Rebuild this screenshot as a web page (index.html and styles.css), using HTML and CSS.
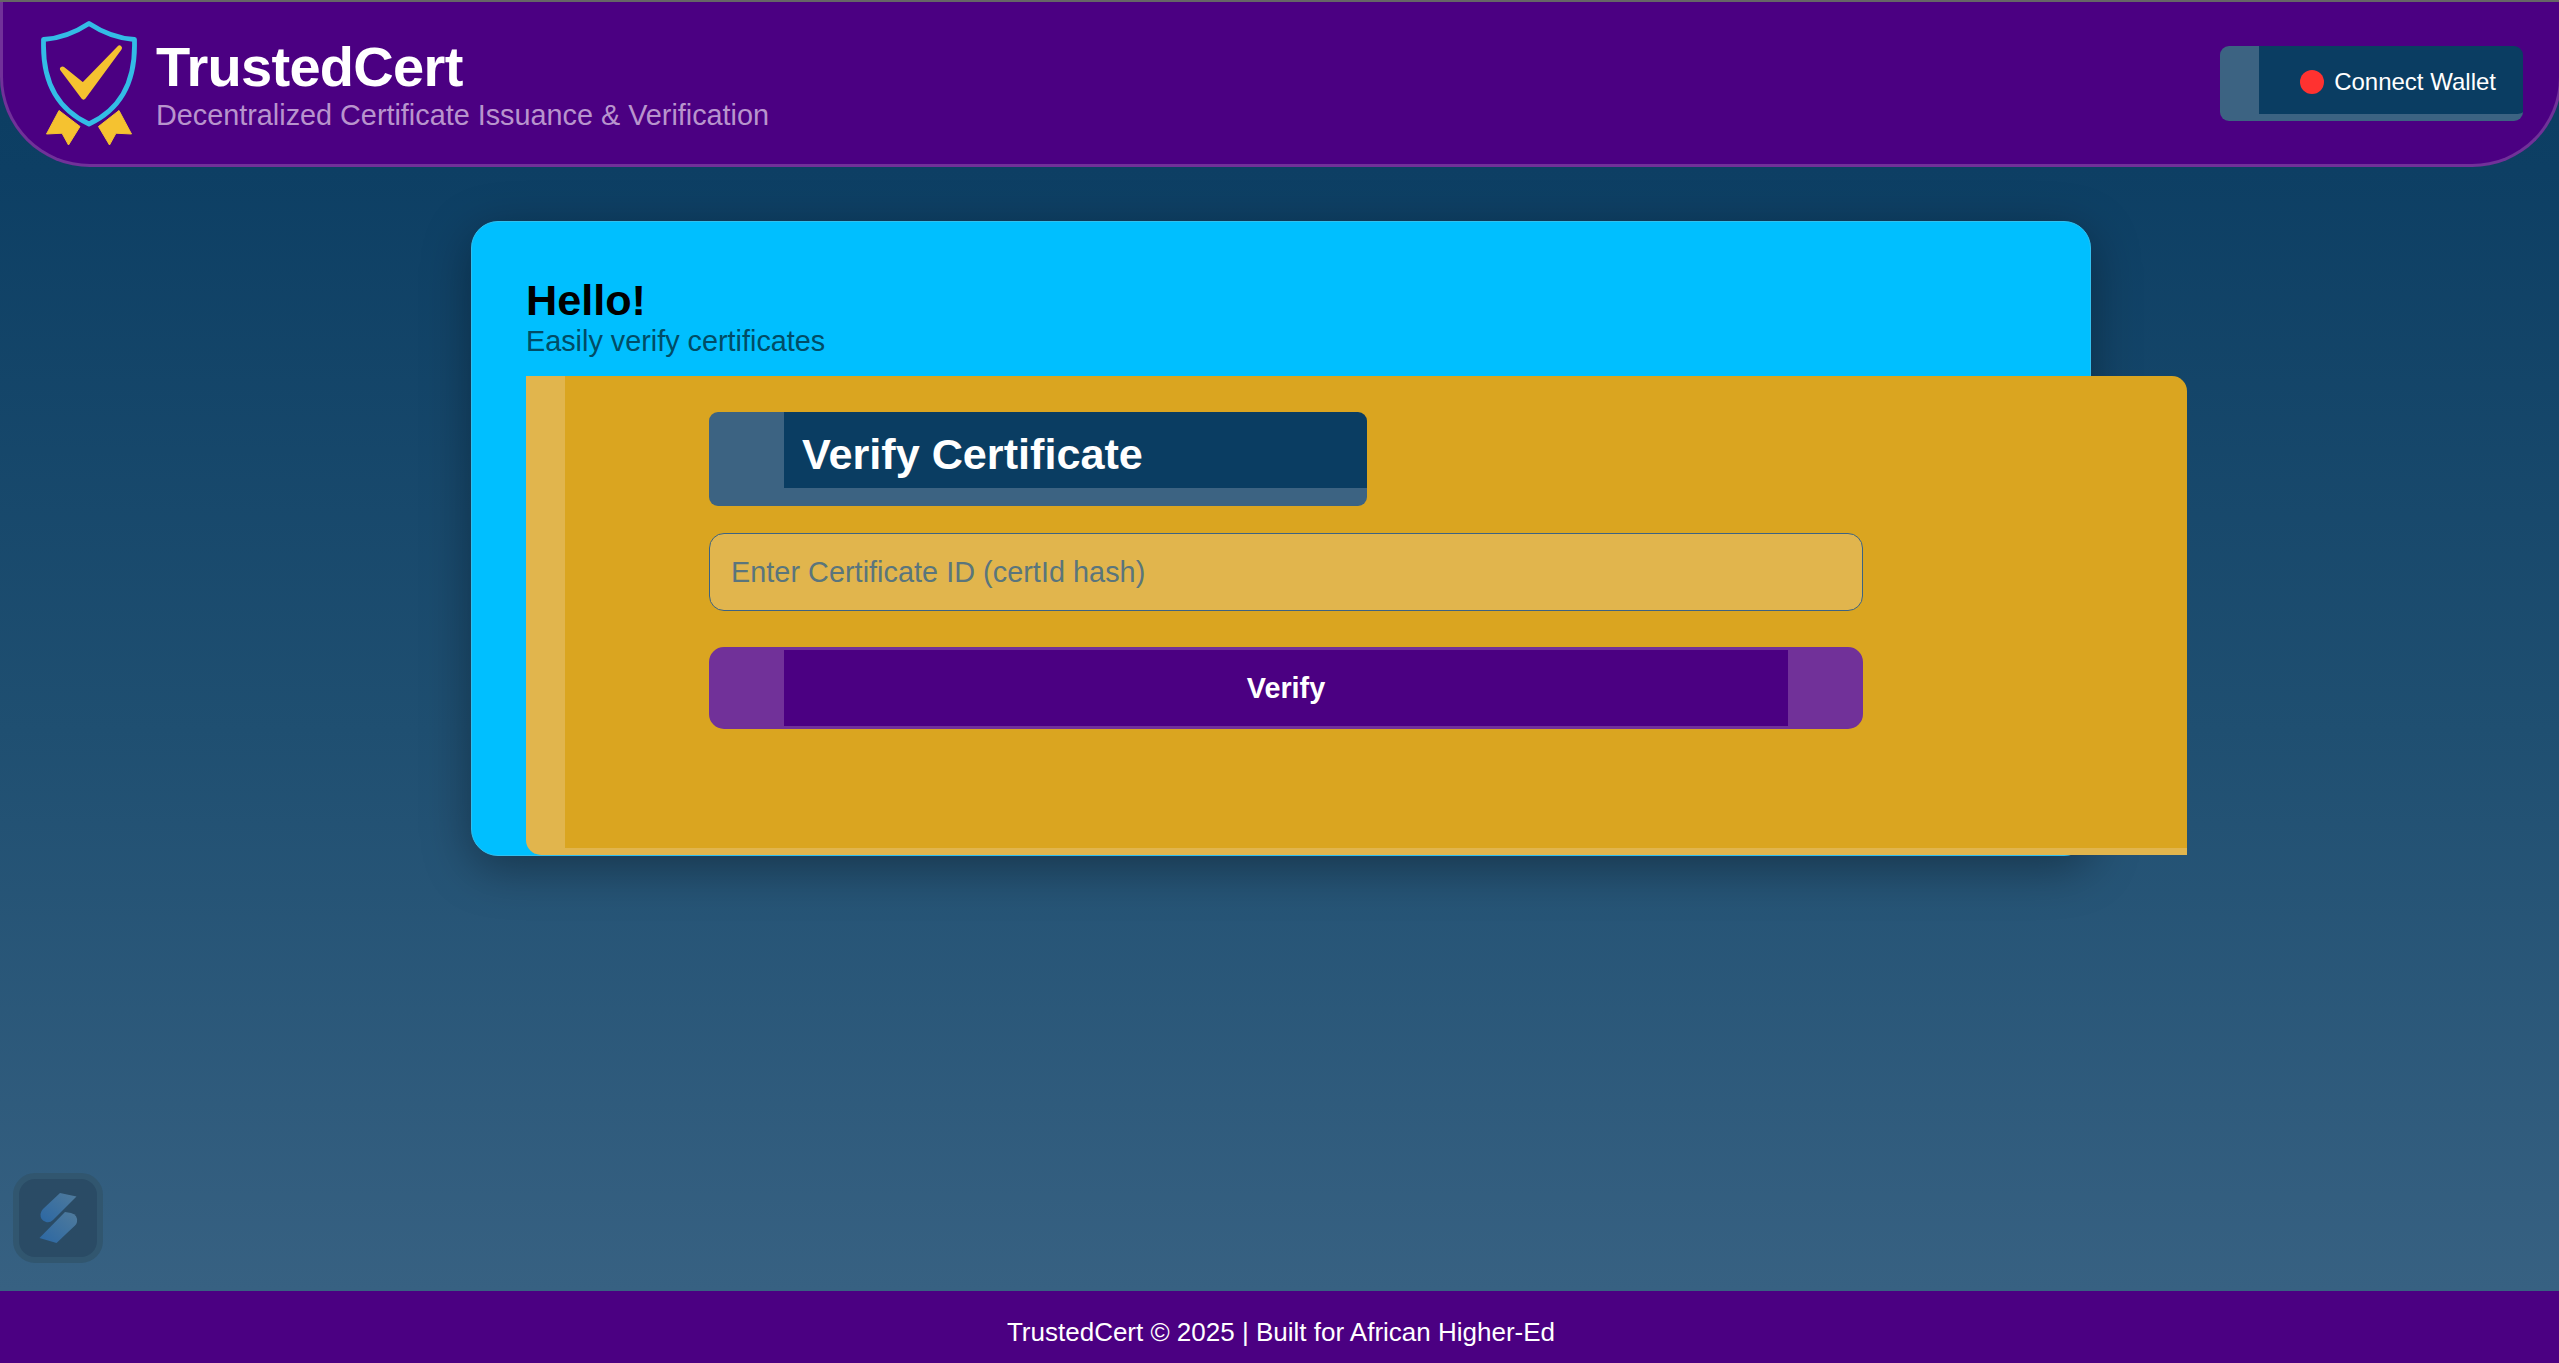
FILE: index.html
```html
<!DOCTYPE html>
<html lang="en">
<head>
<meta charset="utf-8">
<title>TrustedCert</title>
<link rel="stylesheet" href="styles.css">
</head>
<body>
<header class="header">
  <div class="brand">
    <svg class="logo" viewBox="38 16 102 134" aria-hidden="true">
      <path d="M89 23.5Q67 38 43.5 39.5V46C43.5 85 60 110.500 89 124C118 110.500 134.500 85 134.500 46V39.500Q111 38 89 23.500Z" fill="none" stroke="#33bce6" stroke-width="4.800" stroke-linejoin="round"/>
      <path d="M62.500 69L83 85.500L119.500 48L83.500 97Z" fill="#f5c230" stroke="#f5c230" stroke-width="5" stroke-linejoin="round"/>
      <path d="M59 110.500L80 126.500L68.500 145L62 133.200L46.500 134ZM119 110.500L98.500 126.500L109.500 145L116 133.200L131.500 134Z" fill="#f5c230" stroke="#f5c230" stroke-linejoin="round"/>
    </svg>
    <div class="brand-text">
      <h1 class="brand-name">TrustedCert</h1>
      <p class="tagline">Decentralized Certificate Issuance &amp; Verification</p>
    </div>
  </div>
  <button class="wallet"><span class="dot"></span>Connect Wallet</button>
</header>
<main class="main">
  <section class="card">
    <h2 class="hello">Hello!</h2>
    <p class="intro">Easily verify certificates</p>
    <div class="panel">
      <h2 class="panel-title">Verify Certificate</h2>
      <input class="cert-input" type="text" placeholder="Enter Certificate ID (certId hash)">
      <button class="verify">Verify</button>
    </div>
  </section>
</main>
<footer class="footer">TrustedCert © 2025 | Built for African Higher-Ed</footer>
<div class="widget">
  <svg class="widget-icon" viewBox="0 0 78 78" aria-hidden="true">
    <defs>
      <linearGradient id="blade" x1="0" y1="1" x2="1" y2="0"><stop offset="0" stop-color="#2b67a3"/><stop offset="1" stop-color="#507b9c"/></linearGradient>
    </defs>
    <path d="M41 14L57.500 17.500L34 41Q31 44 27 43Q21 41 21.500 35Q22 32 24 30Z" fill="url(#blade)"/>
    <path d="M37.500 64L20.500 59L46 33L52 34Q59 36 58 43Q57.500 45 56 46.500Z" fill="url(#blade)"/>
  </svg>
</div>
</body>
</html>
```
FILE: styles.css
```css
* { box-sizing: border-box; }
body {
  margin: 0;
  height: 1363px;
  overflow: hidden;
  display: flex;
  flex-direction: column;
  position: relative;
  border-top: 2px solid #666;
  background: linear-gradient(#0a3c61 0, #0d3f64 170px, #1f4f71 730px, #376182 1290px, #3c6382);
  font-family: "Liberation Sans", Arial, sans-serif;
}
h1, h2, p { margin: 0; }
button, input { font-family: inherit; margin: 0; }
.header {
  flex: none;
  width: 2562px;
  height: 165px;
  display: flex;
  justify-content: space-between;
  align-items: flex-start;
  padding: 14px 36px 0 35px;
  background: #4b0082;
  border: 3px solid #713199;
  border-top: 0;
  border-radius: 0 0 90px 90px;
}
.brand { display: flex; }
.logo { width: 102px; height: 134px; flex: none; }
.brand-text { padding: 20px 0 0 16px; }
.brand-name { font-size: 56px; line-height: 62px; letter-spacing: -.7px; color: #fff; }
.tagline { font-size: 28.8px; line-height: 34px; color: #b894cd; }
.wallet {
  display: flex;
  align-items: center;
  justify-content: flex-end;
  gap: 10.5px;
  width: 303px;
  height: 75px;
  margin-top: 30px;
  padding: 3px 27px 0 0;
  border: 0 solid #3c6382;
  border-width: 0 0 7px 39px;
  border-radius: 9px;
  background: #0a3d62;
  color: #fff;
  font-size: 24px;
  white-space: nowrap;
}
.dot { width: 24px; height: 24px; border-radius: 50%; background: #ff3230; }
.main { flex: none; height: 1124px; padding: 54px 0 0 471px; }
.card {
  width: 1620px;
  height: 635px;
  padding: 54px;
  border: 1px solid #30c0f0;
  border-radius: 27px;
  background: #00bfff;
  box-shadow: 0 12px 48px rgba(0, 0, 0, .35);
}
.hello { font-size: 43.2px; line-height: 48px; color: #000; }
.intro { font-size: 28.8px; line-height: 34px; color: #004c66; margin-bottom: 18px; }
.panel {
  width: 1661px;
  height: 479px;
  padding: 36px 0 0 144px;
  border: 0 solid #e1b54d;
  border-width: 0 0 7px 39px;
  border-radius: 0 15px 0 15px;
  background: #daa520;
}
.panel-title {
  width: 658px;
  height: 94px;
  padding: 18px 18px 0;
  border: 0 solid #3c6382;
  border-width: 0 0 18px 75px;
  border-radius: 9px;
  background: #0a3d62;
  color: #fff;
  font-size: 43.2px;
  line-height: 48px;
}
.cert-input {
  display: block;
  width: 1154px;
  height: 78px;
  margin: 27px 0 36px;
  padding: 0 21px;
  border: 1px solid #3c6382;
  border-radius: 15px;
  background: #e1b54d;
  font-size: 28.8px;
  letter-spacing: .04px;
}
.cert-input::placeholder { color: #5a757c; opacity: 1; }
.verify {
  display: block;
  width: 1154px;
  height: 82px;
  padding: 0;
  border: 3px solid #713199;
  border-width: 3px 75px;
  border-radius: 15px;
  background: #4b0082;
  color: #fff;
  font-size: 28.8px;
  font-weight: bold;
}
.footer {
  flex: none;
  height: 82px;
  background: #4b0082;
  color: #fff;
  font-size: 26px;
  line-height: 82px;
  text-align: center;
  padding-left: 3px;
}
.widget {
  position: absolute;
  left: 13px;
  top: 1171px;
  width: 90px;
  height: 90px;
  border: 6px solid #31566f;
  border-radius: 22px;
  background: #2a4b65;
}
.widget-icon { display: block; width: 78px; height: 78px; }
```
